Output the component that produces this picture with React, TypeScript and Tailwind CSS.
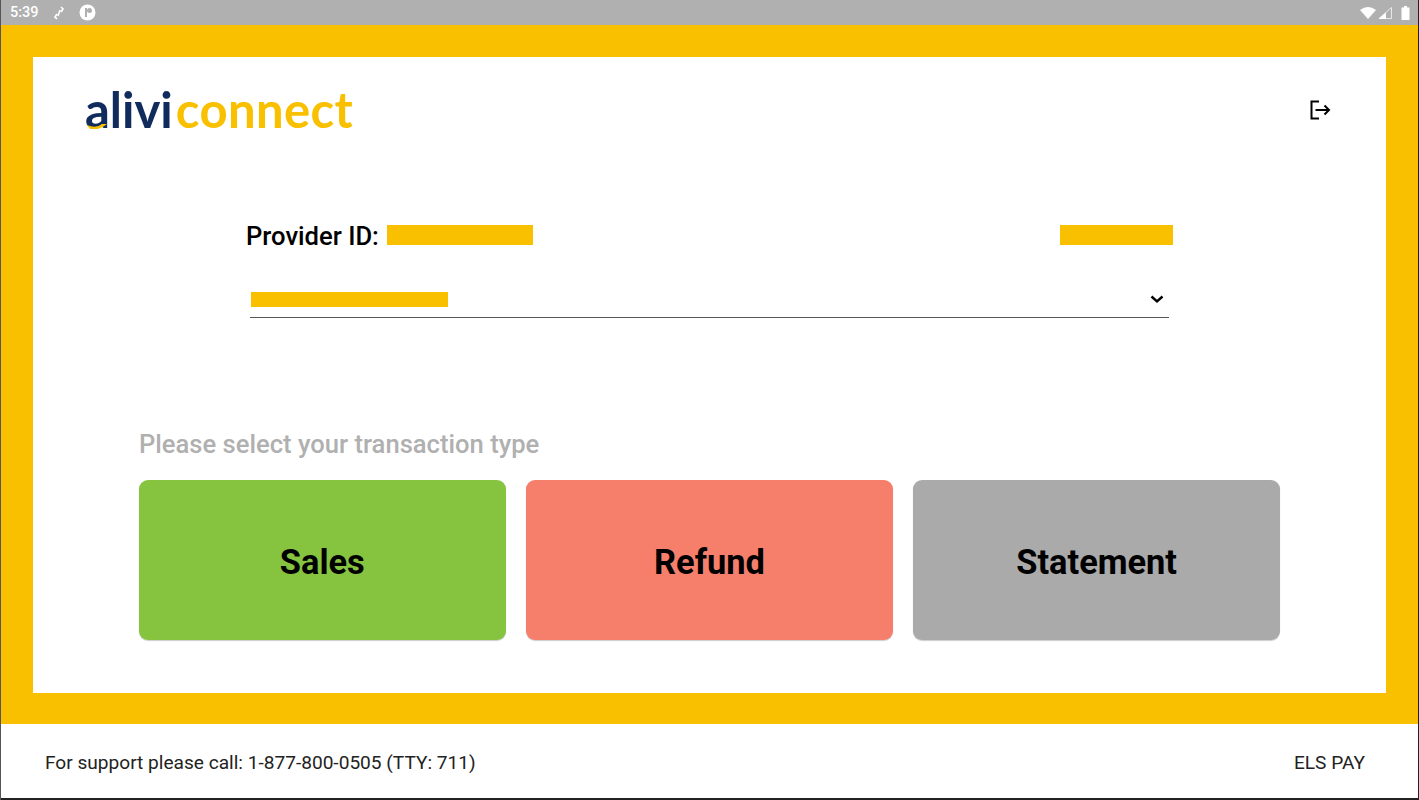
import React from "react";

function Wifi() {
  return (
    <svg width="16" height="12" viewBox="0 0 16 12"><path d="M0 3 Q8 -3 16 3 L8 12 Z" fill="#fff" /></svg>
  );
}
function Signal() {
  return (
    <svg width="14" height="12" viewBox="0 0 14 12">
      <path d="M13.5 0.5 V11.5 H1 Z" fill="none" stroke="#fff" strokeWidth="1" opacity="0.7" />
      <path d="M8 5.5 V12 H0.5 Z" fill="#fff" />
    </svg>
  );
}
function Battery() {
  return (
    <svg width="9" height="14" viewBox="0 0 9 14"><path d="M3 0 H6 V1.5 H8.5 V14 H.5 V1.5 H3 Z" fill="#fff" /></svg>
  );
}

function Redact({ className }: { className: string }) {
  return <div className={`bg-[#f9c000] ${className}`} />;
}

function Tile({ label, color }: { label: string; color: string }) {
  return (
    <div
      className={`${color} flex h-[160px] items-center justify-center rounded-[9px] pt-[6px] text-[34.4px] font-bold text-black shadow-[0_1px_1px_rgba(0,0,0,0.2)]`}
    >
      {label}
    </div>
  );
}

export default function App() {
  return (
    <div className="flex h-[800px] w-[1419px] flex-col overflow-hidden bg-white font-['Roboto',sans-serif] border-l border-l-[#555] border-r border-r-[#222]">
      <div className="flex h-[25px] items-center justify-between bg-[#b0b0b0] pl-[9px] pr-[8px] text-white">
        <div className="flex items-center">
          <span className="text-[14.5px] font-medium">5:39</span>
          <svg className="ml-[15px]" width="10" height="14" viewBox="0 0 10 14">
            <path d="M7 1 L9 3 L7 6 M3 13 L1 11 L3 8 M6 4 L4 10" fill="none" stroke="#fff" strokeWidth="1.6" />
          </svg>
          <svg className="ml-[15px]" width="17" height="17" viewBox="0 0 17 17">
            <circle cx="8.5" cy="8.5" r="8" fill="#fff" />
            <rect x="6" y="4" width="2" height="9" fill="#b0b0b0" />
            <circle cx="10.5" cy="6.5" r="2.5" fill="#b0b0b0" />
          </svg>
        </div>
        <div className="flex items-center gap-[2px]">
          <Wifi />
          <Signal />
          <div className="ml-[7px] flex"><Battery /></div>
        </div>
      </div>

      <div className="h-[699px] bg-[#f9c000] pb-[31px] pl-[32px] pr-[32px] pt-[32px]">
        <div className="flex h-[636px] flex-col bg-white">
          <div className="flex items-start justify-between pl-[52px] pr-[54px] pt-[22px]">
            <div className="relative flex font-['Lato',sans-serif] text-[49px] font-bold leading-[60px]">
              <span className="relative text-[#0f2c5c]">alivi</span>
              <span className="ml-[3px] tracking-[0.4px] text-[#f9c000]">connect</span>
              <svg className="absolute bottom-[10px] left-[2px]" width="22" height="5" viewBox="0 0 22 5">
                <path d="M0 1 Q9 5 15 0 L20 0 Q12 7 3 5 Z" fill="#f9c000" />
              </svg>
            </div>
            <svg className="mt-[19px]" width="24" height="24" viewBox="0 0 24 24" fill="none" stroke="#000" strokeWidth="2">
              <path d="M11 3.5 H3.5 V20.5 H11" />
              <path d="M7.5 12 H21 M16.5 7.5 L21 12 L16.5 16.5" />
            </svg>
          </div>

          <div className="ml-[213px] mt-[80px] flex w-[927px] items-center">
            <span className="relative top-[1px] text-[25.6px] font-medium leading-[32px] text-black">Provider ID:</span>
            <Redact className="ml-[8px] h-[20px] w-[146px]" />
            <Redact className="ml-auto h-[20px] w-[113px]" />
          </div>

          <div className="ml-[217px] mt-[29px] flex h-[38px] w-[919px] items-center justify-between border-b border-b-[#555] pt-[2px]">
            <Redact className="ml-[1px] h-[15px] w-[197px]" />
            <svg className="mr-[4px] -mt-[2px]" width="16" height="16" viewBox="0 0 16 16" fill="none" stroke="#000" strokeWidth="2.4">
              <path d="M2.5 5.5 L8 10.5 L13.5 5.5" />
            </svg>
          </div>

          <div className="ml-[106px] mt-[108px] w-[1141px]">
            <div className="text-[25.6px] font-medium leading-[36px] text-[#b0b0b0]">Please select your transaction type</div>
            <div className="mt-[18px] grid grid-cols-3 gap-[20.5px]">
              <Tile label="Sales" color="bg-[#86c440]" />
              <Tile label="Refund" color="bg-[#f67f6c]" />
              <Tile label="Statement" color="bg-[#aaaaaa]" />
            </div>
          </div>
        </div>
      </div>

      <div className="flex h-[76px] items-center justify-between border-b-2 border-b-[#222] pl-[44px] pr-[53px] pt-[5px] text-[19.1px] text-[#222]">
        <span>For support please call: 1-877-800-0505 (TTY: 711)</span>
        <span>ELS PAY</span>
      </div>
    </div>
  );
}
